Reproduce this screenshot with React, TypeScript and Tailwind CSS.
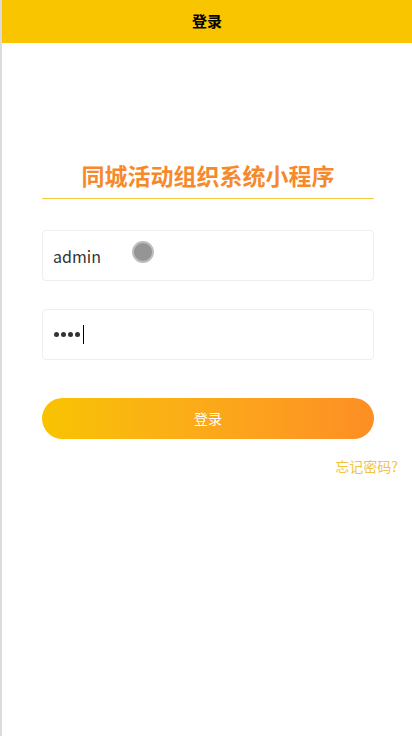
import { useState } from 'react';

export default function App() {
  const [username, setUsername] = useState('admin');

  return (
    <div className="flex h-[736px] w-[412px] bg-white font-['Microsoft_YaHei','Noto_Sans_CJK_SC',sans-serif]">
      <div className="w-[2px] shrink-0 bg-[#dcdcdc]" />
      <div className="flex flex-1 flex-col">
        <header className="flex h-[43px] items-center justify-center bg-[#f9c400]">
          <span className="text-[15px] font-bold text-black">登录</span>
        </header>

        <main className="flex flex-col pl-10 pr-[38px] pt-[116px]">
          <h1 className="border-b border-[#f5c842] pb-[6px] text-center text-[23px] font-bold leading-[33px] text-[#f6892b]">
            同城活动组织系统小程序
          </h1>

          <div className="relative mt-[31px] flex h-[51px] items-center rounded-[4px] border border-[#eeeeee] px-[10px]">
            <input
              className="w-full bg-transparent text-[16px] text-[#333] outline-none"
              value={username}
              onChange={(e) => setUsername(e.target.value)}
            />
            {/* touch indicator */}
            <span className="pointer-events-none absolute left-[89px] top-[10px] h-[22px] w-[22px] rounded-full border-2 border-[#bdbdbd] bg-[#959595]" />
          </div>

          <div className="mt-[28px] flex h-[51px] items-center gap-[2px] rounded-[4px] border border-[#eeeeee] px-[11px]">
            <span className="h-[5px] w-[5px] rounded-full bg-[#333]" />
            <span className="h-[5px] w-[5px] rounded-full bg-[#333]" />
            <span className="h-[5px] w-[5px] rounded-full bg-[#333]" />
            <span className="h-[5px] w-[5px] rounded-full bg-[#333]" />
            <span className="ml-[1px] h-[19px] w-[1px] bg-black" />
          </div>

          <button className="mt-[38px] h-[41px] rounded-full bg-gradient-to-r from-[#f8c300] to-[#fd8e24] text-[14px] text-white">
            登录
          </button>

          <div className="-mr-[24px] mt-[17px] text-right text-[14px] text-[#f3c33f]">忘记密码?</div>
        </main>
      </div>
    </div>
  );
}
